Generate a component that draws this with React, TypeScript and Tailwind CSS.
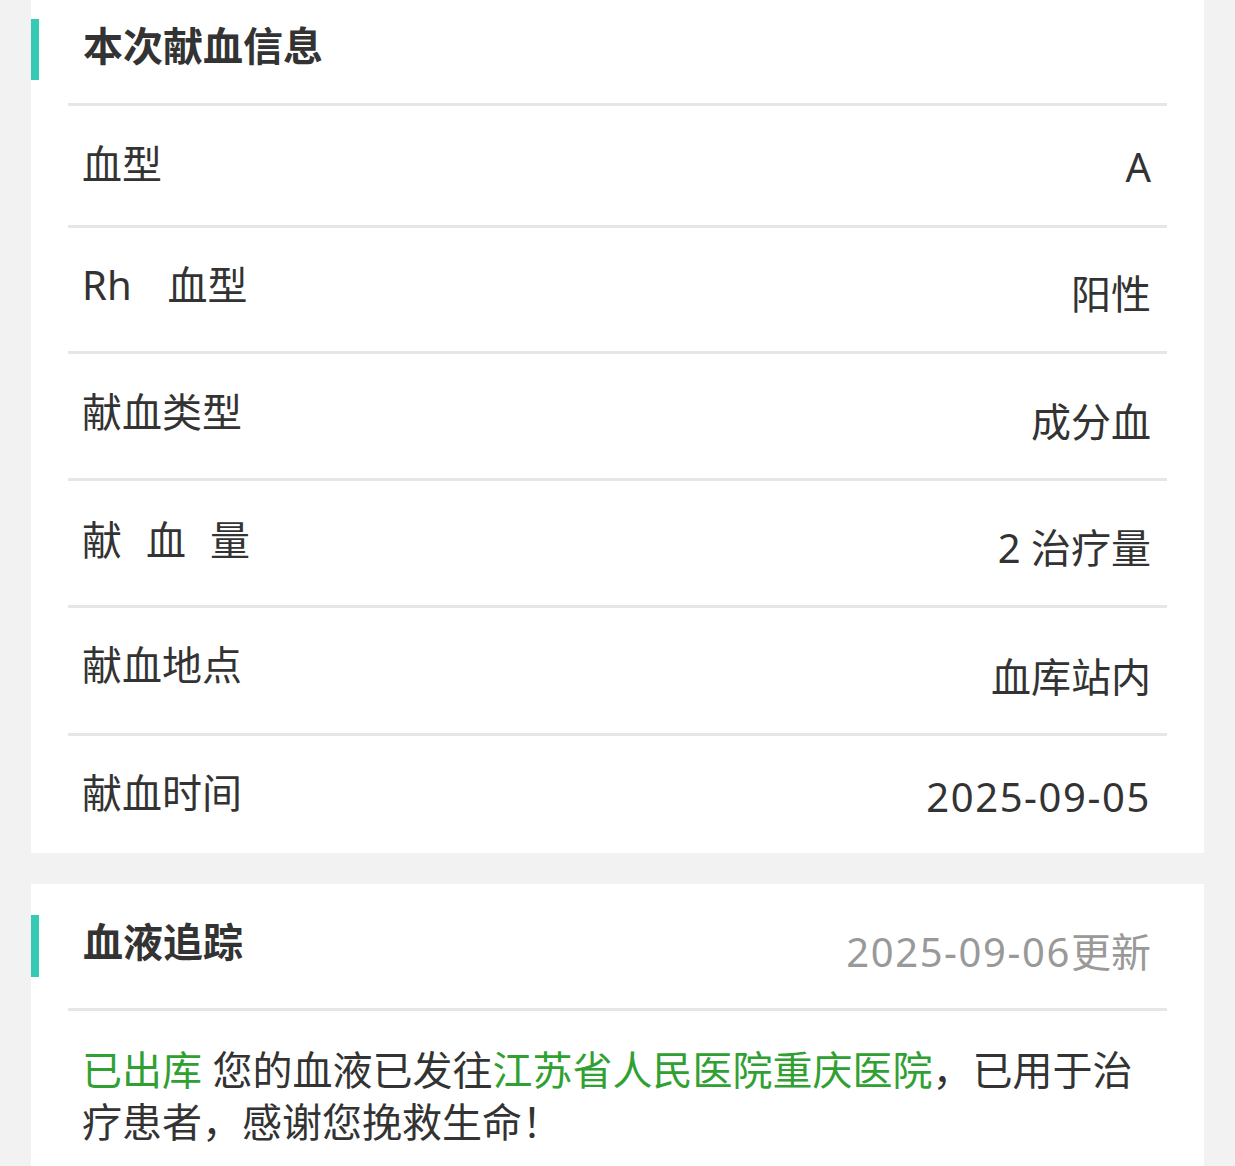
import React from "react";

type Row = {
  label: React.ReactNode;
  value: React.ReactNode;
  h: string;
  lt: string;
  vt: string;
};

const rows: Row[] = [
  { label: "血型", value: "A", h: "h-[122px]", lt: "mt-[28px]", vt: "mt-[31px]" },
  {
    label: (
      <span className="flex">
        <span>Rh</span>
        <span className="ml-[36px]">血型</span>
      </span>
    ),
    value: "阳性",
    h: "h-[126px]",
    lt: "mt-[27px]",
    vt: "mt-[36px]",
  },
  { label: "献血类型", value: "成分血", h: "h-[127px]", lt: "mt-[28px]", vt: "mt-[38px]" },
  {
    label: (
      <span className="flex gap-[24px]">
        <span>献</span>
        <span>血</span>
        <span>量</span>
      </span>
    ),
    value: "2 治疗量",
    h: "h-[127px]",
    lt: "mt-[29px]",
    vt: "mt-[37px]",
  },
  { label: "献血地点", value: "血库站内", h: "h-[128px]", lt: "mt-[27px]", vt: "mt-[39px]" },
  {
    label: "献血时间",
    value: <span className="tracking-[1.6px]">2025-09-05</span>,
    h: "h-[120px]",
    lt: "mt-[27px]",
    vt: "mt-[31px]",
  },
];

export default function App() {
  return (
    <div
      className="min-h-[1166px] w-full bg-[#f2f2f2] px-[31px] text-[#333333]"
      style={{ fontFamily: '"Noto Sans", "Noto Sans CJK SC", sans-serif' }}
    >
      {/* Card 1 */}
      <div className="bg-white">
        <div className="flex h-[103px] items-start">
          <div className="mt-[19px] h-[61px] w-[8px] bg-[#36c9b4]" />
          <div className="ml-[44px] mt-[16px] text-[40px] font-bold leading-[60px]">
            本次献血信息
          </div>
        </div>
        <div className="px-[37px]">
          {rows.map((r, i) => (
            <div
              key={i}
              className={`flex ${r.h} items-start justify-between border-t-[3px] border-[#e6e6e6] pl-[14px] pr-[16px]`}
            >
              <div className={`${r.lt} text-[40px] leading-[60px]`}>{r.label}</div>
              <div className={`${r.vt} text-[40px] leading-[60px]`}>{r.value}</div>
            </div>
          ))}
        </div>
      </div>

      <div className="h-[31px]" />

      {/* Card 2 */}
      <div className="bg-white pb-[40px]">
        <div className="flex h-[124px] items-start">
          <div className="mt-[31px] h-[62px] w-[8px] bg-[#36c9b4]" />
          <div className="ml-[44px] mt-[28px] text-[40px] font-bold leading-[60px]">
            血液追踪
          </div>
          <div className="ml-auto mr-[53px] mt-[38px] text-[40px] leading-[60px] text-[#999999]">
            <span className="tracking-[1.6px]">2025-09-06</span>更新
          </div>
        </div>
        <div className="px-[37px]">
          <div className="border-t-[3px] border-[#e6e6e6] pl-[14px] pr-[16px] pt-[33px]">
            <p className="text-[40px] leading-[52px]">
              <span className="text-[#31a032]">已出库</span> 您的血液已发往
              <span className="text-[#31a032]">江苏省人民医院重庆医院</span>
              ，已用于治疗患者，感谢您挽救生命！
            </p>
          </div>
        </div>
      </div>
    </div>
  );
}
